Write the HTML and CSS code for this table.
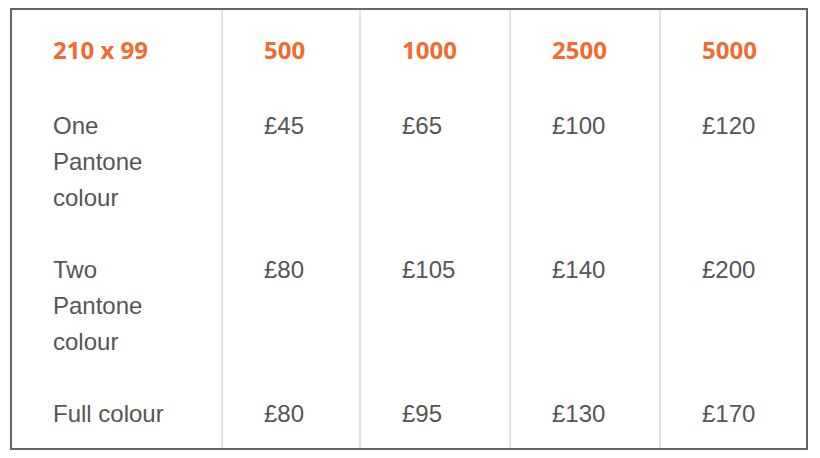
FILE: index.html
```html
<!DOCTYPE html>
<html lang="en">
<head>
<meta charset="utf-8">
<title>Prices</title>
<link rel="stylesheet" href="styles.css">
</head>
<body>
<div class="frame">
  <table class="prices">
    <colgroup>
      <col class="c1"><col class="c2"><col class="c3"><col class="c4"><col class="c5">
    </colgroup>
    <thead>
      <tr>
        <th>210 x 99</th>
        <th>500</th>
        <th>1000</th>
        <th>2500</th>
        <th>5000</th>
      </tr>
    </thead>
    <tbody>
      <tr>
        <td>One Pantone colour</td>
        <td>£45</td>
        <td>£65</td>
        <td>£100</td>
        <td>£120</td>
      </tr>
      <tr>
        <td>Two Pantone colour</td>
        <td>£80</td>
        <td>£105</td>
        <td>£140</td>
        <td>£200</td>
      </tr>
      <tr class="last">
        <td>Full colour</td>
        <td>£80</td>
        <td>£95</td>
        <td>£130</td>
        <td>£170</td>
      </tr>
    </tbody>
  </table>
</div>
</body>
</html>
```

FILE: styles.css
```css
html, body {
  margin: 0;
  padding: 0;
  background: #ffffff;
}

body {
  padding: 8px 0 0 10px;
}

.frame {
  width: 798px;
  box-sizing: border-box;
  border: 2px solid #666666;
}

.prices {
  width: 794px;
  border-collapse: collapse;
  table-layout: fixed;
}

.c1 { width: 210px; }
.c2 { width: 138px; }
.c3 { width: 150px; }
.c4 { width: 150px; }
.c5 { width: 146px; }

.prices th,
.prices td {
  text-align: left;
  vertical-align: top;
  border-right: 2px solid #e2e2e2;
  padding: 18px 41px 18px 41px;
  line-height: 36px;
}

.prices th:last-child,
.prices td:last-child {
  border-right: none;
}

.prices th {
  font-family: "Open Sans", "Liberation Sans", sans-serif;
  font-weight: 700;
  font-size: 24px;
  color: #f26a2e;
  padding-top: 22px;
  padding-bottom: 22px;
}

.prices td {
  font-family: "Liberation Sans", Arial, sans-serif;
  font-weight: 400;
  font-size: 24px;
  color: #555555;
}

.prices td:first-child {
  padding-right: 41px;
}

.prices tr.last td {
  padding-bottom: 16px;
}
```
